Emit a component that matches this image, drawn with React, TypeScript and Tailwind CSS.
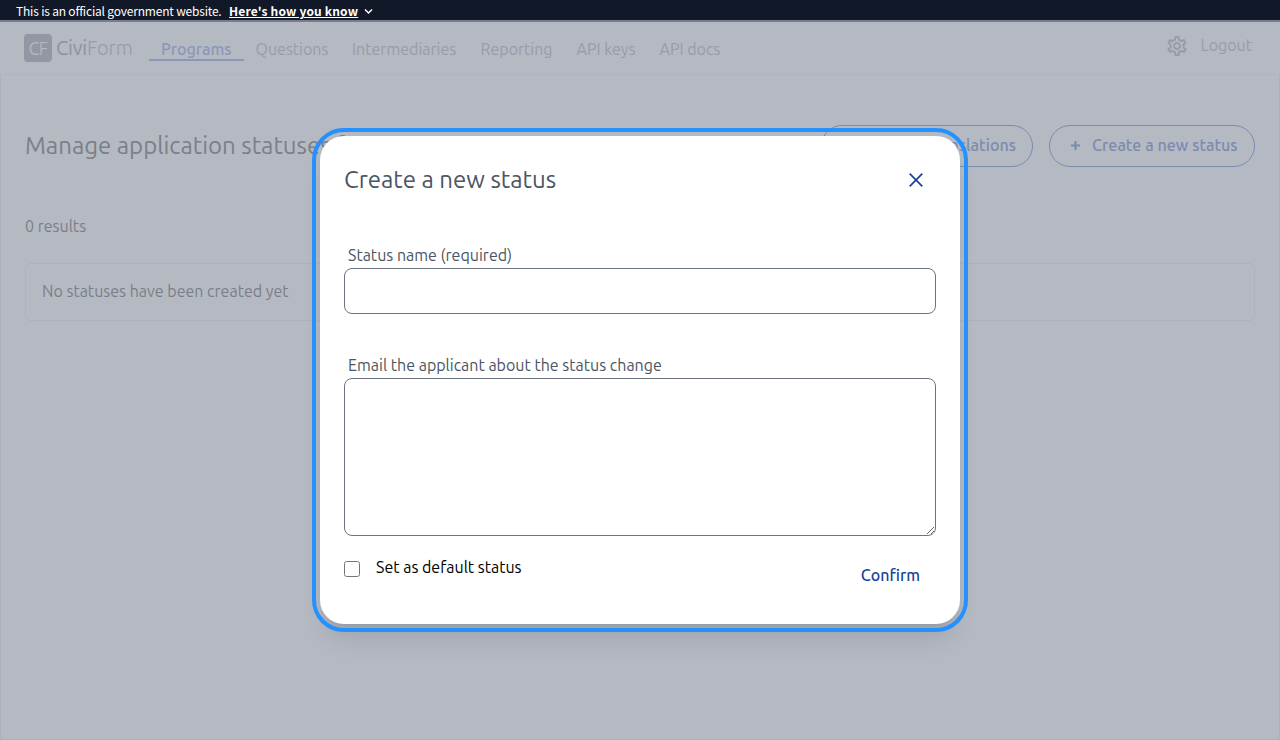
import React from "react";

const navItems = [
  { label: "Questions", width: "w-[72.5px]" },
  { label: "Intermediaries", width: "w-[104.5px]" },
  { label: "Reporting", width: "w-[72px]" },
  { label: "API keys", width: "w-[59px]" },
  { label: "API docs", width: "w-[61px]" },
];

function GovBanner() {
  return (
    <div className="flex h-5 items-center bg-[#111827] pl-4 pt-[2px] font-['Source_Sans_Pro','Noto_Sans_CJK_SC',sans-serif] text-[12px] leading-5 text-white">
      <span className="w-[213px] whitespace-nowrap tracking-[-0.19px]">This is an official government website.</span>
      <span className="w-[129px] whitespace-nowrap font-bold tracking-[0.17px] underline">Here's how you know</span>
      <svg className="ml-1.5 mt-px h-[7px] w-[9px]" viewBox="0 0 9 7" fill="none" stroke="white" strokeWidth="1.5">
        <path d="M1 1.5 4.5 5 8 1.5" />
      </svg>
    </div>
  );
}

function Header() {
  return (
    <header className="flex h-[53px] shrink-0 border-b border-[#b0b4bd] pl-6 pr-7 text-[#989ca8]">
      <div className="mt-3 flex h-7 w-[125px] items-center">
        <div className="flex size-7 items-center justify-center rounded bg-[#9297a3] text-lg leading-7 tracking-[-0.8px] text-[#b5b9c2]">
          C<span className="font-light">F</span>
        </div>
        <div className="ml-1 whitespace-nowrap text-xl font-light leading-7 tracking-[-0.2px]">
          <span className="font-normal text-[#8e929e]">Civi</span>Form
        </div>
      </div>
      <nav className="mt-3 flex h-[27px] gap-[11.5px] whitespace-nowrap leading-[30px]">
        <span className="w-[95px] border-b-2 border-[#8998b9] pl-3 font-medium text-[#8998b9]">Programs</span>
        <div className="flex gap-6">
          {navItems.map((n) => (
            <span key={n.label} className={n.width}>{n.label}</span>
          ))}
        </div>
      </nav>
      <div className="ml-auto mt-[11px] flex h-6 items-center">
        <svg className="mr-[11.5px] mt-px size-6" viewBox="0 0 24 24" fill="#989ca8">
          <path d="M19.43 12.98c.04-.32.07-.64.07-.98 0-.34-.03-.66-.07-.98l2.11-1.65c.19-.15.24-.42.12-.64l-2-3.46c-.09-.16-.26-.25-.44-.25-.06 0-.12.01-.17.03l-2.49 1c-.52-.4-1.08-.73-1.69-.98l-.38-2.65C14.46 2.18 14.25 2 14 2h-4c-.25 0-.46.18-.49.42l-.38 2.65c-.61.25-1.17.59-1.69.98l-2.49-1c-.06-.02-.12-.03-.18-.03-.17 0-.34.09-.43.25l-2 3.46c-.13.22-.07.49.12.64l2.11 1.65c-.04.32-.07.65-.07.98 0 .33.03.66.07.98l-2.11 1.65c-.19.15-.24.42-.12.64l2 3.46c.09.16.26.25.44.25.06 0 .12-.01.17-.03l2.49-1c.52.4 1.08.73 1.69.98l.38 2.65c.03.24.24.42.49.42h4c.25 0 .46-.18.49-.42l.38-2.65c.61-.25 1.17-.59 1.69-.98l2.49 1c.06.02.12.03.18.03.17 0 .34-.09.43-.25l2-3.46c.12-.22.07-.49-.12-.64l-2.11-1.65zm-1.98-1.71c.04.31.05.52.05.73 0 .21-.02.43-.05.73l-.14 1.13.89.7 1.08.84-.7 1.21-1.27-.51-1.04-.42-.9.68c-.43.32-.84.56-1.25.73l-1.06.43-.16 1.13-.2 1.35h-1.4l-.19-1.35-.16-1.13-1.06-.43c-.43-.18-.83-.41-1.23-.71l-.91-.7-1.06.43-1.27.51-.7-1.21 1.08-.84.89-.7-.14-1.13c-.03-.31-.05-.54-.05-.74s.02-.43.05-.73l.14-1.13-.89-.7-1.08-.84.7-1.21 1.27.51 1.04.42.9-.68c.43-.32.84-.56 1.25-.73l1.06-.43.16-1.13.2-1.35h1.39l.19 1.35.16 1.13 1.06.43c.43.18.83.41 1.23.71l.91.7 1.06-.43 1.27-.51.7 1.21-1.07.85-.89.7.14 1.13zM12 8c-2.21 0-4 1.79-4 4s1.79 4 4 4 4-1.79 4-4-1.79-4-4-4zm0 6c-1.1 0-2-.9-2-2s.9-2 2-2 2 .9 2 2-.9 2-2 2z" />
        </svg>
        <span className="w-[51.5px] whitespace-nowrap">Logout</span>
      </div>
    </header>
  );
}

function Content() {
  return (
    <main className="flex-1 border border-t-0 border-[#adb1bc] px-6 pt-[50px] text-[#7b7f88]">
      <div className="flex h-[42px] items-center justify-between">
        <h1 className="whitespace-nowrap text-2xl">Manage application statuses for Test</h1>
        <div className="flex gap-4 font-medium tracking-[0.06px] text-[#7b8bb0]">
          <button className="h-[42px] w-[212px] rounded-full border border-[#7b8bb0] pb-0.5 pr-4 text-right">Manage translations</button>
          <button className="flex h-[42px] w-[206px] items-center rounded-full border border-[#7b8bb0] pb-0.5 pl-5">
            <svg className="mr-[11px] mt-px size-[11px]" viewBox="0 0 11 11" stroke="#7b8bb0" strokeWidth="2">
              <path d="M5.5 1v9M1 5.5h9" />
            </svg>
            <span className="whitespace-nowrap">Create a new status</span>
          </button>
        </div>
      </div>
      <p className="mt-[47px]">0 results</p>
      <div className="mt-[25px] flex h-[58px] items-center rounded-md border border-[#adb1bc] pb-0.5 pl-4">No statuses have been created yet</div>
    </main>
  );
}

function StatusModal() {
  return (
    <div role="dialog" className="absolute left-80 top-[136px] flex h-[488px] w-[640px] flex-col rounded-3xl bg-white px-6 pt-6 shadow-xl outline-4 outline-offset-4 outline-[#2491ff]">
      <div className="flex h-10 items-center justify-between pr-[13px] text-[#4b5563]">
        <h2 className="text-2xl">Create a new status</h2>
        <svg className="size-[14px]" viewBox="0 0 14 14" stroke="#1a4499" strokeWidth="1.7">
          <path d="M.7.7l12.6 12.6M13.3.7.7 13.3" />
        </svg>
      </div>
      <label className="mt-[43px] h-[25px] pl-1 text-[#4b5563]">Status name (required)</label>
      <input className="h-[46px] w-full rounded-lg border border-[#6b7280] outline-none" />
      <label className="mt-[39px] h-[25px] pl-1 text-[#4b5563]">Email the applicant about the status change</label>
      <textarea className="h-[158px] w-full shrink-0 rounded-lg border border-[#6b7280] outline-none" />
      <div className="flex">
        <input type="checkbox" className="mt-[25px] size-4" />
        <span className="ml-4 mt-[19px] text-black">Set as default status</span>
        <button className="ml-auto mr-4 mt-[27px] font-medium text-[#1a4499]">Confirm</button>
      </div>
    </div>
  );
}

export default function App() {
  return (
    <div className="relative flex h-[740px] w-[1280px] flex-col overflow-hidden bg-[#b5b9c2] font-[Ubuntu,'Open_Sans',sans-serif] text-base">
      <GovBanner />
      <div className="h-0.5 bg-[#787c8b]" />
      <Header />
      <Content />
      <StatusModal />
    </div>
  );
}
